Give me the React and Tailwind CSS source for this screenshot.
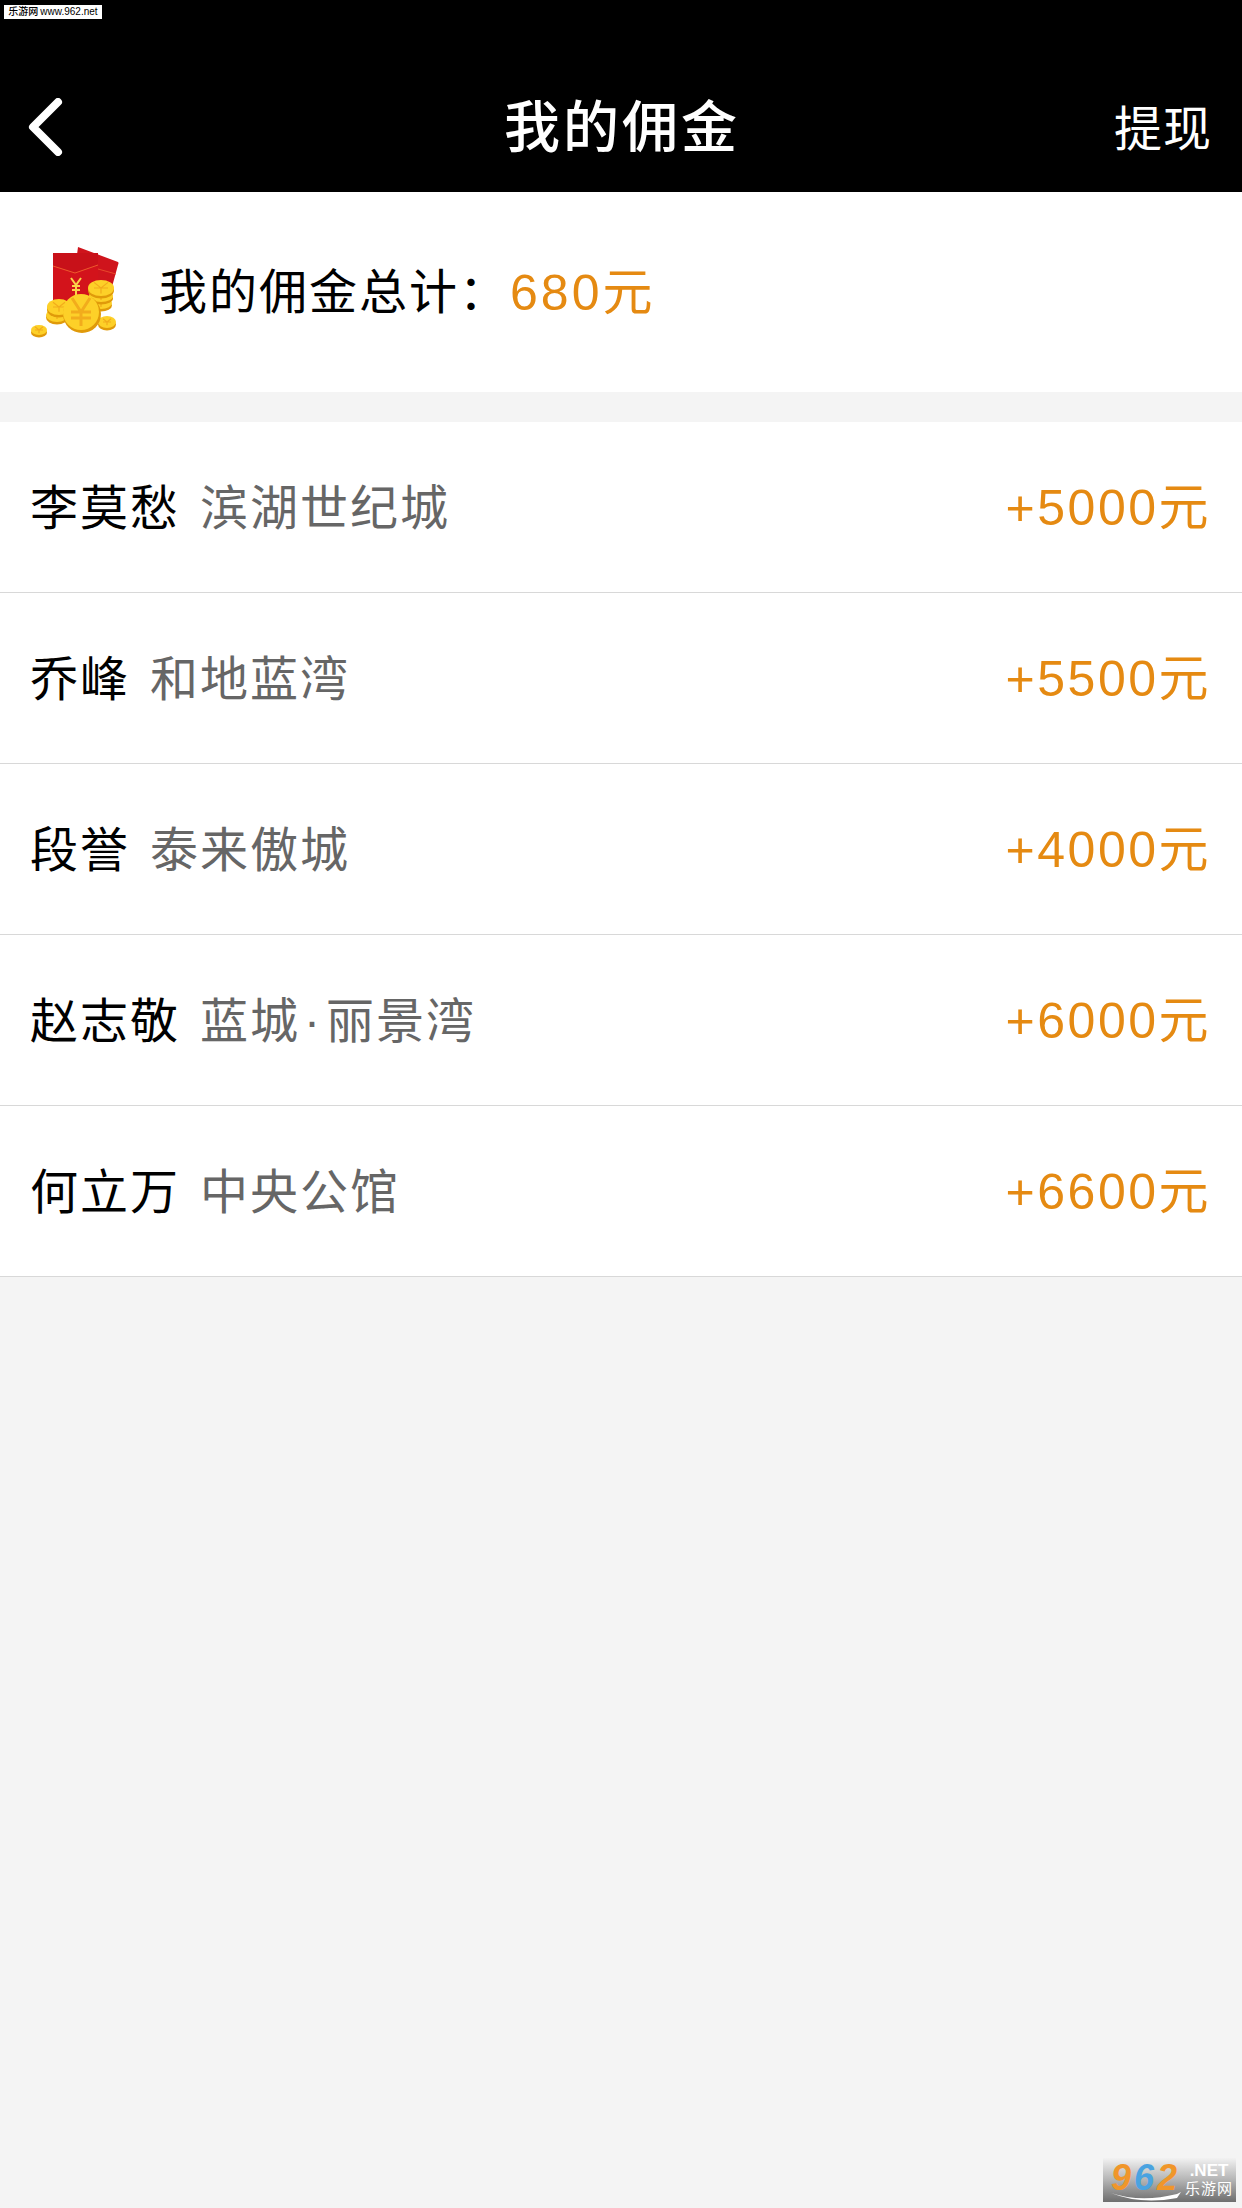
import React from 'react'

const FONT = "font-['Liberation_Sans','Noto_Sans_CJK_SC',sans-serif]"

const rows = [
  { name: '李莫愁', place: '滨湖世纪城', amount: '+5000元' },
  { name: '乔峰', place: '和地蓝湾', amount: '+5500元' },
  { name: '段誉', place: '泰来傲城', amount: '+4000元' },
  { name: '赵志敬', place: <>蓝城<span className="mx-[4px]">·</span>丽景湾</>, amount: '+6000元' },
  { name: '何立万', place: '中央公馆', amount: '+6600元' },
]

function Coin({ cx, cy, rx, ry, size }) {
  return (
    <g>
      <ellipse cx={cx} cy={cy + 2.5} rx={rx} ry={ry} fill="#e09a0a" />
      <ellipse cx={cx} cy={cy} rx={rx} ry={ry} fill="#fdd028" />
      <path
        d={`M${cx - size} ${cy - size * 0.8} L${cx} ${cy} L${cx + size} ${cy - size * 0.8} M${cx - size} ${cy} H${cx + size} M${cx} ${cy} V${cy + size * 0.8}`}
        stroke="#f2ac1c"
        strokeWidth="1.2"
        fill="none"
      />
    </g>
  )
}

// red envelopes with a pile of coins
function RedPacket() {
  return (
    <svg width="92" height="96" viewBox="0 0 92 96" className="shrink-0">
      <path d="M49 2 L89 17 Q90 18 89 20 L78 60 L44 40 Z" fill="#cf141c" />
      <path d="M69 24 L87 29" stroke="#e8482a" strokeWidth="1" />
      <rect x="24" y="8" width="45" height="58" rx="1.5" fill="#d3131b" />
      <path d="M24 8 H69 V20 L46 28 L24 21 Z" fill="#c81119" />
      <path d="M24 21 L46 28 L69 20" stroke="#ee5a2c" strokeWidth="1" fill="none" />
      <path d="M42 33 L47 40 L52 33 M43 41 H51 M43 45 H51 M47 40 V50" stroke="#fbd24a" strokeWidth="2" fill="none" />
      <Coin cx={72} cy={58} rx={11} ry={6} size={5} />
      <Coin cx={72} cy={51} rx={12} ry={6} size={5} />
      <Coin cx={72} cy={43} rx={13} ry={8} size={7} />
      <Coin cx={28} cy={70} rx={11} ry={7} size={5} />
      <Coin cx={30} cy={62} rx={12} ry={8} size={6} />
      <Coin cx={78} cy={77} rx={9} ry={6} size={4} />
      <Coin cx={10} cy={85} rx={8} ry={5} size={4} />
      <circle cx="53" cy="69" r="19" fill="#e09a0a" />
      <circle cx="52" cy="67" r="18" fill="#fdd028" />
      <path d="M43 53 L52 67 L61 53 M42 67 H62 M42 73 H62 M52 67 V81" stroke="#f2ac1c" strokeWidth="3" fill="none" />
    </svg>
  )
}

function Row({ name, place, amount }) {
  return (
    <div className="h-[171px] bg-white border-b border-[#d8d8d8] flex items-center justify-between pt-[3px] pl-[30px] pr-[31px]">
      <div className="flex items-center">
        <span className="text-[48px] tracking-[2px] text-black">{name}</span>
        <span className="ml-[20px] text-[48px] tracking-[2px] text-[#666666]">{place}</span>
      </div>
      <span className="text-[50px] tracking-[2.5px] text-[#e58a12]">{amount}</span>
    </div>
  )
}

function SiteLogo() {
  return (
    <div className="absolute right-[6px] bottom-[6px] w-[133px] h-[44px] bg-gradient-to-b from-[#f2f2f2] via-[#b4b4b4] to-[#6e6e6e] flex items-start pl-[8px] pt-[2px]">
      <div className="relative w-[74px] shrink-0">
        <span className="text-[36px] leading-none font-bold italic tracking-[3px]">
          <span className="text-[#f0962a]">9</span>
          <span className="text-[#4aa3e0]">6</span>
          <span className="text-[#f0962a]">2</span>
        </span>
        <svg width="72" height="12" viewBox="0 0 72 12" className="absolute left-0 top-[31px]">
          <path d="M0 2 Q30 12 66 3 L70 1 L66 7 Q30 14 0 2 Z" fill="white" />
        </svg>
      </div>
      <div className="flex flex-col items-center leading-none pt-[2px]">
        <span className="text-[17px] font-bold text-white">.NET</span>
        <span className="text-[15px] text-white mt-[2px] tracking-[1px]">乐游网</span>
      </div>
    </div>
  )
}

export default function App() {
  return (
    <div className={`relative w-[1242px] h-[2208px] overflow-hidden bg-[#f4f4f4] ${FONT}`}>
      <div className="absolute left-[4px] top-[5px] w-[98px] h-[14px] bg-white flex items-center justify-center gap-[2px] text-[10px] leading-none font-medium text-black whitespace-nowrap">
        <span>乐游网</span>
        <span>www.962.net</span>
      </div>

      <header className="h-[192px] bg-black text-white flex items-end pb-[29px] pl-[28px] pr-[30px]">
        <div className="w-[300px] h-[70px] flex items-center pb-[3px]">
          <svg width="36" height="58" viewBox="0 0 36 58" fill="none">
            <path d="M30 4 L5 29 L30 54" stroke="white" strokeWidth="8" strokeLinecap="round" strokeLinejoin="round" />
          </svg>
        </div>
        <h1 className="flex-1 h-[70px] leading-[70px] text-center text-[56px] tracking-[3px] font-medium pl-[4px]">我的佣金</h1>
        <div className="w-[300px] h-[70px] leading-[70px] text-right text-[48px] tracking-[1px] pt-[2px]">提现</div>
      </header>

      <section className="h-[200px] bg-white flex items-center pt-[2px] pl-[29px]">
        <RedPacket />
        <span className="ml-[38px] text-[48px] tracking-[2px] text-black">我的佣金总计：</span>
        <span className="ml-[1px] text-[50px] tracking-[3px] text-[#e58a12]">680元</span>
      </section>

      <div className="mt-[30px]">
        {rows.map((r) => (
          <Row key={r.name} {...r} />
        ))}
      </div>

      <SiteLogo />
    </div>
  )
}
